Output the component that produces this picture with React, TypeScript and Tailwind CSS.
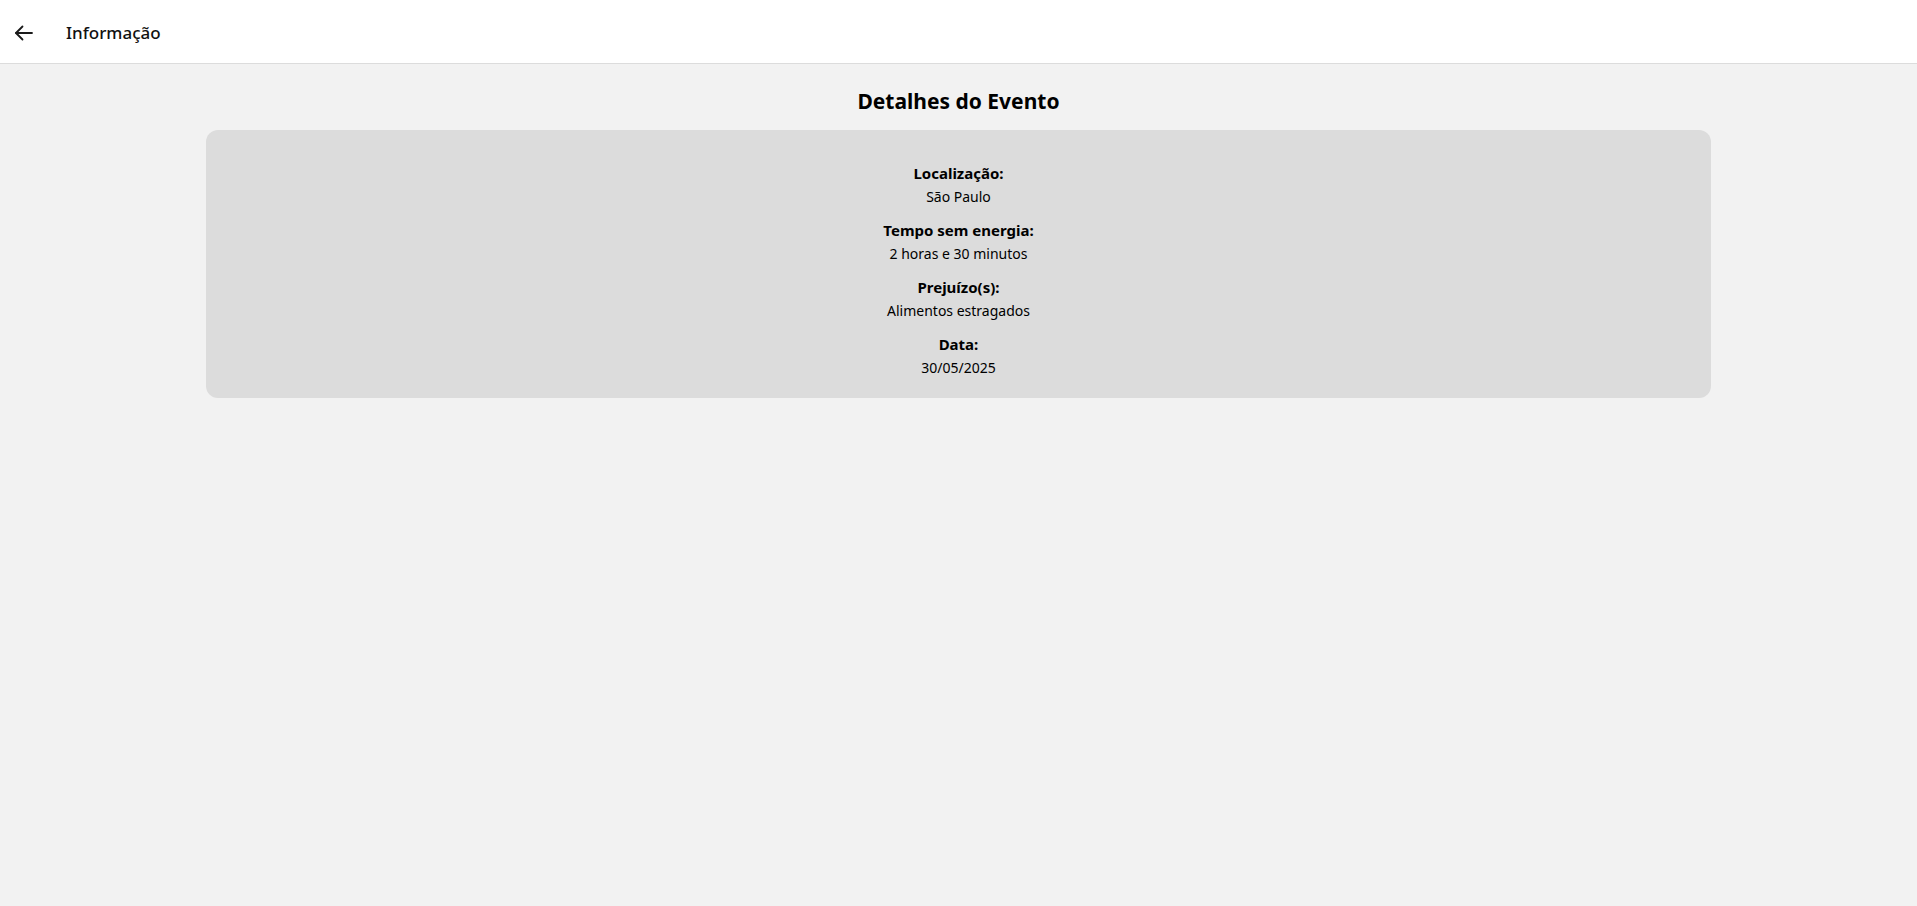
import React from "react";

const items = [
  { label: "Localização:", value: "São Paulo" },
  { label: "Tempo sem energia:", value: "2 horas e 30 minutos" },
  { label: "Prejuízo(s):", value: "Alimentos estragados" },
  { label: "Data:", value: "30/05/2025" },
];

export default function App() {
  return (
    <div className="min-h-screen bg-[#f2f2f2] text-black" style={{ fontFamily: '"Noto Sans", sans-serif' }}>
      <header className="h-[64px] bg-white border-b border-[#dcdcdc] flex items-center">
        <button className="w-[24px] h-[24px] ml-[12px] mt-[2px] flex items-center justify-center text-[#1a1a1a]">
          <svg width="24" height="24" viewBox="0 0 24 24" fill="none" stroke="currentColor" strokeWidth="1.8" strokeLinecap="round" strokeLinejoin="round">
            <path d="M20 12H4" />
            <path d="M10.5 5.5L4 12l6.5 6.5" />
          </svg>
        </button>
        <h1 className="ml-[30px] mt-[2px] text-[17px] font-medium text-[#111]">Informação</h1>
      </header>
      <main className="flex flex-col items-center px-[206px]">
        <h2 className="mt-[23px] text-[21px] font-bold leading-[28px]">Detalhes do Evento</h2>
        <div className="mt-[15px] w-full rounded-[12px] bg-[#dcdcdc] pt-[32px] pb-[18px] flex flex-col items-center">
          {items.map((it) => (
            <div key={it.label} className="flex flex-col items-center mb-[10px] last:mb-0">
              <span className="text-[15px] font-bold leading-[23px]">{it.label}</span>
              <span className="text-[14px] leading-[24px]">{it.value}</span>
            </div>
          ))}
        </div>
      </main>
    </div>
  );
}
